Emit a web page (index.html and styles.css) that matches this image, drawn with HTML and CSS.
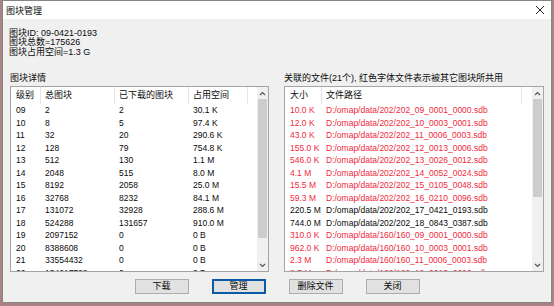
FILE: index.html
```html
<!DOCTYPE html>
<html lang="zh-CN">
<head>
  <meta charset="UTF-8">
  <title>图块管理</title>
  <link rel="stylesheet" href="styles.css">
</head>
<body>

  <div class="window">

    <!-- Title bar -->
    <div class="titlebar">
      <span class="title">图块管理</span>
      <svg class="close" width="10" height="10" viewBox="0 0 10 10">
        <path d="M1 1 L9 9 M9 1 L1 9" stroke="#222" stroke-width="1" fill="none"/>
      </svg>
    </div>

    <!-- Summary -->
    <div class="info">
      <div>图块ID: 09-0421-0193</div>
      <div>图块总数=175626</div>
      <div>图块占用空间=1.3 G</div>
    </div>

    <div class="panels">

      <!-- Tile levels -->
      <div class="panel">
        <div class="panel-label">图块详情</div>
        <div class="listbox">
          <div class="list-body">
            <div class="row head tiles"><span>级别</span><span>总图块</span><span>已下载的图块</span><span>占用空间</span><span></span></div>
            <div class="row tiles"><span>09</span><span>2</span><span>2</span><span>30.1 K</span></div>
            <div class="row tiles"><span>10</span><span>8</span><span>5</span><span>97.4 K</span></div>
            <div class="row tiles"><span>11</span><span>32</span><span>20</span><span>290.6 K</span></div>
            <div class="row tiles"><span>12</span><span>128</span><span>79</span><span>754.8 K</span></div>
            <div class="row tiles"><span>13</span><span>512</span><span>130</span><span>1.1 M</span></div>
            <div class="row tiles"><span>14</span><span>2048</span><span>515</span><span>8.0 M</span></div>
            <div class="row tiles"><span>15</span><span>8192</span><span>2058</span><span>25.0 M</span></div>
            <div class="row tiles"><span>16</span><span>32768</span><span>8232</span><span>84.1 M</span></div>
            <div class="row tiles"><span>17</span><span>131072</span><span>32928</span><span>288.6 M</span></div>
            <div class="row tiles"><span>18</span><span>524288</span><span>131657</span><span>910.0 M</span></div>
            <div class="row tiles"><span>19</span><span>2097152</span><span>0</span><span>0 B</span></div>
            <div class="row tiles"><span>20</span><span>8388608</span><span>0</span><span>0 B</span></div>
            <div class="row tiles"><span>21</span><span>33554432</span><span>0</span><span>0 B</span></div>
            <div class="row tiles"><span>22</span><span>134217728</span><span>0</span><span>0 B</span></div>
          </div>
          <div class="scrollbar">
            <div class="arrow"><svg width="7" height="5" viewBox="0 0 7 5"><path d="M1 4 L3.5 1.5 L6 4" stroke="#555" stroke-width="1.2" fill="none"/></svg></div>
            <div class="track"><div class="thumb thumb-tiles"></div></div>
            <div class="arrow"><svg width="7" height="5" viewBox="0 0 7 5"><path d="M1 1 L3.5 3.5 L6 1" stroke="#555" stroke-width="1.2" fill="none"/></svg></div>
          </div>
        </div>
      </div>

      <!-- Related files -->
      <div class="panel">
        <div class="panel-label">关联的文件(21个), 红色字体文件表示被其它图块所共用</div>
        <div class="listbox">
          <div class="list-body">
            <div class="row head files"><span>大小</span><span>文件路径</span><span></span></div>
            <div class="row files shared"><span>10.0 K</span><span>D:/omap/data/202/202_09_0001_0000.sdb</span></div>
            <div class="row files shared"><span>12.0 K</span><span>D:/omap/data/202/202_10_0003_0001.sdb</span></div>
            <div class="row files shared"><span>43.0 K</span><span>D:/omap/data/202/202_11_0006_0003.sdb</span></div>
            <div class="row files shared"><span>155.0 K</span><span>D:/omap/data/202/202_12_0013_0006.sdb</span></div>
            <div class="row files shared"><span>546.0 K</span><span>D:/omap/data/202/202_13_0026_0012.sdb</span></div>
            <div class="row files shared"><span>4.1 M</span><span>D:/omap/data/202/202_14_0052_0024.sdb</span></div>
            <div class="row files shared"><span>15.5 M</span><span>D:/omap/data/202/202_15_0105_0048.sdb</span></div>
            <div class="row files shared"><span>59.3 M</span><span>D:/omap/data/202/202_16_0210_0096.sdb</span></div>
            <div class="row files"><span>220.5 M</span><span>D:/omap/data/202/202_17_0421_0193.sdb</span></div>
            <div class="row files"><span>744.0 M</span><span>D:/omap/data/202/202_18_0843_0387.sdb</span></div>
            <div class="row files shared"><span>310.0 K</span><span>D:/omap/data/160/160_09_0001_0000.sdb</span></div>
            <div class="row files shared"><span>962.0 K</span><span>D:/omap/data/160/160_10_0003_0001.sdb</span></div>
            <div class="row files shared"><span>2.3 M</span><span>D:/omap/data/160/160_11_0006_0003.sdb</span></div>
            <div class="row files shared"><span>8.7 M</span><span>D:/omap/data/160/160_12_0013_0006.sdb</span></div>
          </div>
          <div class="scrollbar">
            <div class="arrow"><svg width="7" height="5" viewBox="0 0 7 5"><path d="M1 4 L3.5 1.5 L6 4" stroke="#555" stroke-width="1.2" fill="none"/></svg></div>
            <div class="track"><div class="thumb thumb-files"></div></div>
            <div class="arrow"><svg width="7" height="5" viewBox="0 0 7 5"><path d="M1 1 L3.5 3.5 L6 1" stroke="#555" stroke-width="1.2" fill="none"/></svg></div>
          </div>
        </div>
      </div>

    </div>

    <!-- Buttons -->
    <div class="buttons">
      <button class="btn">下载</button>
      <button class="btn default">管理</button>
      <button class="btn">删除文件</button>
      <button class="btn">关闭</button>
    </div>

  </div>

</body>
</html>
```

FILE: styles.css
```css
body {
  margin: 0;
  background: #a98282;
  font-family: "Liberation Sans", "Noto Sans CJK SC", sans-serif;
  font-size: 9px;
  color: #0a0a0a;
}
.window {
  box-sizing: border-box;
  width: 550px;
  height: 303px;
  margin-left: 2px;
  border: 1px solid #868686;
  background: #f0f0f0;
  display: flex;
  flex-direction: column;
}
/* Title bar */
.titlebar {
  height: 18px;
  background: #fff;
  display: flex;
  align-items: center;
  justify-content: space-between;
  padding: 0 6px 0 3px;
}
.title {
  font-size: 9px;
}
.info {
  padding: 9.5px 0 0 6px;
  line-height: 9.5px;
  height: 28.5px;
}
/* Two list panels */
.panels {
  display: grid;
  grid-template-columns: 259px 260px;
  column-gap: 15px;
  padding: 0 7px;
  margin-top: 15.5px;
}
.panel-label {
  line-height: 11px;
  height: 11px;
  margin-bottom: 2.5px;
  white-space: nowrap;
}
.listbox {
  box-sizing: border-box;
  height: 186px;
  border: 1px solid #a4a4a4;
  background: #fff;
  display: flex;
}
.list-body {
  flex: 1;
  overflow: hidden;
}
.row {
  display: grid;
  height: 12.5px;
  line-height: 12.5px;
  font-size: 8.5px;
  white-space: nowrap;
}
.row span {
  padding-left: 4px;
  overflow: hidden;
}
.row span:first-child {
  padding-left: 5px;
}
.row.head {
  height: 17px;
  line-height: 17px;
  font-size: 9px;
}
.row.head span {
  border-right: 1px solid #e5e5e5;
}
.row.head span:last-child {
  border-right: none;
}
.tiles {
  grid-template-columns: 30px 74px 74px 59px 1fr;
}
.files {
  grid-template-columns: 37px 200px 1fr;
}
.shared {
  color: #f02a3c;
}
/* Scrollbar */
.scrollbar {
  width: 11px;
  background: #f0f0f0;
  display: flex;
  flex-direction: column;
}
.arrow {
  height: 12px;
  display: flex;
  align-items: center;
  justify-content: center;
}
.track {
  flex: 1;
  padding: 0 1px;
}
.thumb {
  background: #cdcdcd;
}
.thumb-tiles {
  height: 139px;
}
.thumb-files {
  height: 98px;
}
/* Buttons */
.buttons {
  display: flex;
  justify-content: center;
  gap: 23px;
  margin-top: 7px;
}
.btn {
  box-sizing: border-box;
  width: 54px;
  height: 15px;
  padding: 0;
  border: 1px solid #adadad;
  background: #e1e1e1;
  font-family: "Liberation Sans", "Noto Sans CJK SC", sans-serif;
  font-size: 9px;
  color: #0a0a0a;
  line-height: 13px;
}
.btn.default {
  border-color: #0a5aa5;
  box-shadow: inset 0 0 0 1px #0a5aa5;
}
```
